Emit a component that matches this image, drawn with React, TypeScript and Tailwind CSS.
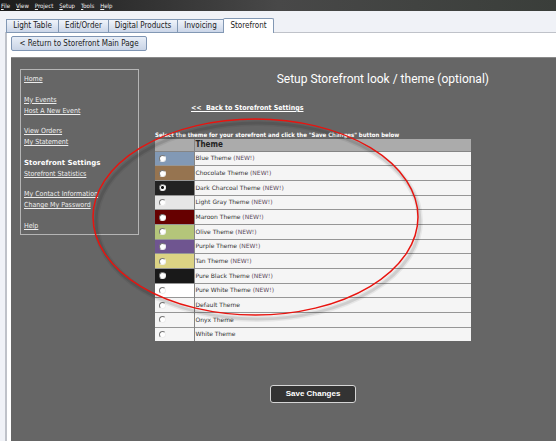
const menus = ['File', 'View', 'Project', 'Setup', 'Tools', 'Help'];

const tabs = [
  { label: 'Light Table', width: 'w-[53px]' },
  { label: 'Edit/Order', width: 'w-[51px]' },
  { label: 'Digital Products', width: 'w-[70px]' },
  { label: 'Invoicing', width: 'w-[47px]' },
];

const links = [
  ['Home'],
  ['My Events', 'Host A New Event'],
  ['View Orders', 'My Statement'],
  ['Storefront Settings', 'Storefront Statistics'],
  ['My Contact Information', 'Change My Password'],
  ['Help'],
];

const themes = [
  { name: 'Blue Theme', isNew: true, swatch: 'bg-[#8299b5]' },
  { name: 'Chocolate Theme', isNew: true, swatch: 'bg-[#967450]' },
  { name: 'Dark Charcoal Theme', isNew: true, swatch: 'bg-[#222222]' },
  { name: 'Light Gray Theme', isNew: true, swatch: 'bg-[#e6e6e6]' },
  { name: 'Maroon Theme', isNew: true, swatch: 'bg-[#660000]' },
  { name: 'Olive Theme', isNew: true, swatch: 'bg-[#b4c57a]' },
  { name: 'Purple Theme', isNew: true, swatch: 'bg-[#6f5590]' },
  { name: 'Tan Theme', isNew: true, swatch: 'bg-[#dcd384]' },
  { name: 'Pure Black Theme', isNew: true, swatch: 'bg-[#191919]' },
  { name: 'Pure White Theme', isNew: true, swatch: 'bg-white' },
  { name: 'Default Theme', isNew: false, swatch: 'bg-[#f5f5f5]' },
  { name: 'Onyx Theme', isNew: false, swatch: 'bg-[#f5f5f5]' },
  { name: 'White Theme', isNew: false, swatch: 'bg-[#f5f5f5]' },
];

function MenuBar() {
  return (
    <nav className="flex h-[11px] items-center gap-[6px] bg-gradient-to-r from-[#1c1c1c] via-[#484848] to-[#3a3e3a] pl-px text-[6px] leading-[10px] text-[#f0f0f0]">
      {menus.map((m) => (
        <button key={m} type="button" className="first-letter:underline">
          {m}
        </button>
      ))}
    </nav>
  );
}

function Tabs() {
  return (
    <div role="tablist" className="relative z-10 -mb-px flex items-end pl-[6px] text-[8px] leading-[12px] text-[#222]">
      {tabs.map((t) => (
        <button
          key={t.label}
          type="button"
          role="tab"
          aria-selected="false"
          className={`${t.width} -mr-px h-[14px] border border-[#8298b4] bg-gradient-to-b from-[#f0f4fa] to-[#cbd6e8] text-center whitespace-nowrap`}
        >
          {t.label}
        </button>
      ))}
      <button
        type="button"
        role="tab"
        aria-selected="true"
        className="h-[15px] w-[51px] rounded-t-xs border border-b-0 border-[#8298b4] bg-white text-center whitespace-nowrap"
      >
        Storefront
      </button>
    </div>
  );
}

function Sidebar() {
  return (
    <nav className="flex h-[166px] w-[119px] shrink-0 flex-col justify-between border border-[#b5b5b5] pt-1 pb-[2px] pl-[3px] text-[7px] leading-[11px] text-[#ececec]">
      {links.map((group) => (
        <ul key={group[0]}>
          {group.map((l) => (
            <li key={l} className="whitespace-nowrap">
              {l === 'Storefront Settings' ? (
                <strong className="font-['DejaVu_Sans',sans-serif] text-white">{l}</strong>
              ) : (
                <a href="#" className="underline">
                  {l}
                </a>
              )}
            </li>
          ))}
        </ul>
      ))}
    </nav>
  );
}

function ThemeTable() {
  return (
    <table className="h-[202px] w-full border-collapse font-['DejaVu_Sans',sans-serif] text-[6px] leading-[8px] text-[#333]">
      <thead>
        <tr className="h-[12px] bg-[#ababab] text-left font-['DejaVu_Sans_Condensed','DejaVu_Sans',sans-serif] text-[8px] leading-[10px] text-[#222]">
          <th className="w-[39px] border-r border-b border-[#858585] p-0" />
          <th className="border-b border-[#858585] p-0 pl-px">Theme</th>
        </tr>
      </thead>
      <tbody>
        {themes.map((t, i) => (
          <tr key={t.name} className="border-b border-[#969696] bg-[#f5f5f5] last:border-b-0">
            <td className={`border-r border-[#858585] p-0 pl-1 ${t.swatch}`}>
              <input
                id={`theme-${i}`}
                type="radio"
                name="theme"
                defaultChecked={i === 2}
                className="block size-[7px] appearance-none rounded-full border border-t-[#777] border-r-[#eee] border-b-[#eee] border-l-[#777] bg-white checked:bg-[radial-gradient(circle,#111_1px,#fff_2px)]"
              />
            </td>
            <td className="p-0 pl-px">
              <label htmlFor={`theme-${i}`}>
                {t.name}
                {t.isNew && <span className="text-[#5c4a5c]"> (NEW!)</span>}
              </label>
            </td>
          </tr>
        ))}
      </tbody>
    </table>
  );
}

function Highlight() {
  return (
    <svg
      aria-hidden="true"
      viewBox="0 0 340 212"
      className="pointer-events-none absolute top-[55px] left-[76px] h-[212px] w-[340px]"
      fill="none"
    >
      <ellipse cx="171" cy="108" rx="162" ry="98" stroke="#000" strokeOpacity="0.06" strokeWidth="6" />
      <ellipse cx="171" cy="108" rx="162" ry="98" stroke="#000" strokeOpacity="0.1" strokeWidth="3" />
      <ellipse cx="168.5" cy="104" rx="162.5" ry="98" stroke="#e8140f" strokeWidth="1.5" />
    </svg>
  );
}

export default function App() {
  return (
    <div className="flex min-h-screen flex-col overflow-hidden bg-[#f0f2f7] font-['DejaVu_Sans_Condensed','DejaVu_Sans',sans-serif]">
      <MenuBar />
      <div className="flex grow flex-col pt-[7px]">
        <Tabs />
        <div className="ml-[5px] flex grow flex-col border-t border-l-2 border-[#bfc2c9] bg-white pt-[3px] pl-1">
          <button
            type="button"
            className="h-[15px] w-[136px] self-start rounded-xs border border-[#7f95b3] bg-gradient-to-b from-[#e8eef7] to-[#c9d4e6] text-[8px] leading-[12px] whitespace-nowrap text-[#222]"
          >
            &lt; Return to Storefront Main Page
          </button>
          <main className="relative mt-[6px] flex grow items-start border-t border-[#8a8a8a] bg-[#666666] pt-[11px] pl-[9px]">
            <Sidebar />
            <div className="ml-4 flex grow flex-col pr-[85px]">
              <h1 className="-mr-[18px] pt-px text-right font-[Roboto,sans-serif] text-[12px] leading-[18px] text-white">
                Setup Storefront look / theme (optional)
              </h1>
              <a href="#" className="mt-[15px] ml-9 self-start text-[7px] leading-[11px] font-bold text-white underline">
                &lt;&lt;&nbsp; Back to Storefront Settings
              </a>
              <p className="mt-4 text-[6px] leading-[9px] font-bold whitespace-nowrap text-white">
                Select the theme for your storefront and click the "Save Changes" button below
              </p>
              <ThemeTable />
              <button
                type="button"
                className="mt-11 h-[18px] w-[86px] self-center rounded-[3px] border border-[#d5d5d5] bg-[#333] font-['Liberation_Sans',sans-serif] text-[8px] font-bold text-white"
              >
                Save Changes
              </button>
            </div>
            <Highlight />
          </main>
        </div>
      </div>
    </div>
  );
}
